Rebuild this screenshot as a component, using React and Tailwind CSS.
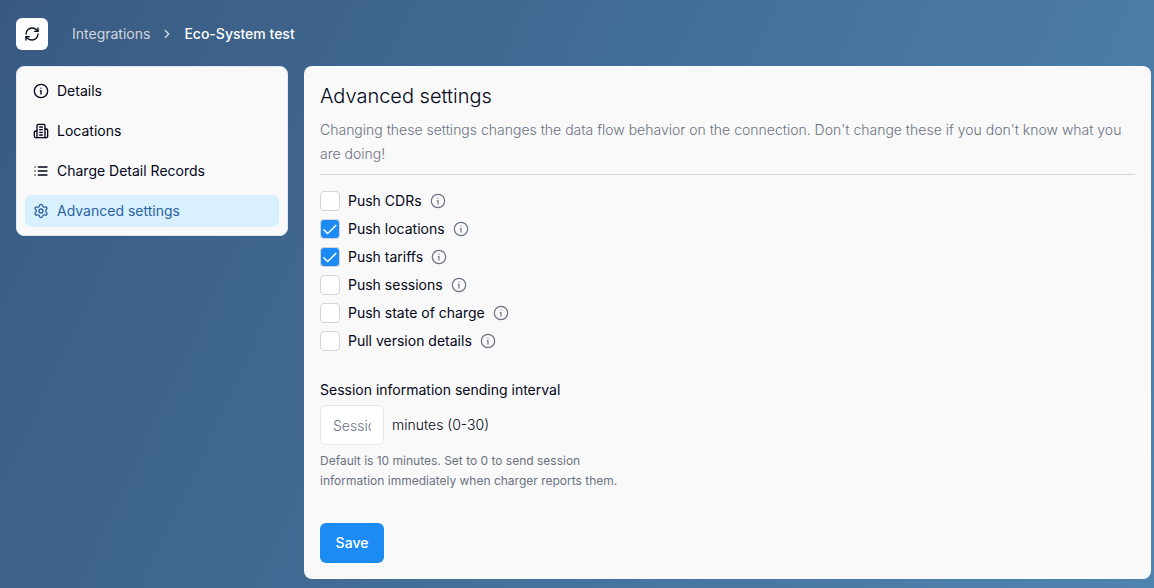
import { ChevronRight, RefreshCw, Settings } from 'lucide-react'

function Icon({ children, strokeWidth = 2, className }) {
  return (
    <svg
      viewBox="0 0 24 24"
      width="16"
      height="16"
      fill="none"
      stroke="currentColor"
      strokeWidth={strokeWidth}
      strokeLinecap="round"
      strokeLinejoin="round"
      className={className}
      aria-hidden="true"
    >
      {children}
    </svg>
  )
}

function InfoIcon(props) {
  return (
    <Icon {...props}>
      <circle cx="12" cy="12" r="10" />
      <path d="M11 11.5h1V16.5M12 7.8h.01" />
    </Icon>
  )
}

function BuildingIcon() {
  return (
    <Icon>
      <path d="M6 22V4a2 2 0 0 1 2-2h8a2 2 0 0 1 2 2v18Z" />
      <path d="M6 12H4a2 2 0 0 0-2 2v6a2 2 0 0 0 2 2h2" />
      <path d="M18 9h2a2 2 0 0 1 2 2v9a2 2 0 0 1-2 2h-2" />
      <path d="M10 6h4M10 10h4M10 14h4M10 18h4" />
    </Icon>
  )
}

function ListIcon() {
  return (
    <Icon>
      <path d="M8 6h13M8 12h13M8 18h13M3 6h.01M3 12h.01M3 18h.01" />
    </Icon>
  )
}

function SettingsIcon() {
  return <Settings size={16} />
}

const NAV_ITEMS = [
  { label: 'Details', NavIcon: InfoIcon },
  { label: 'Locations', NavIcon: BuildingIcon },
  { label: 'Charge Detail Records', NavIcon: ListIcon },
  { label: 'Advanced settings', NavIcon: SettingsIcon, active: true },
]

const OPTIONS = [
  { id: 'push-cdrs', label: 'Push CDRs' },
  { id: 'push-locations', label: 'Push locations', checked: true },
  { id: 'push-tariffs', label: 'Push tariffs', checked: true },
  { id: 'push-sessions', label: 'Push sessions' },
  { id: 'push-soc', label: 'Push state of charge' },
  { id: 'pull-version', label: 'Pull version details' },
]

function Option({ id, label, checked }) {
  return (
    <div className="flex items-center gap-2">
      <span className="relative flex">
        <input
          id={id}
          type="checkbox"
          defaultChecked={checked}
          className="peer size-5 appearance-none rounded border border-gray-300 bg-white checked:bg-[#1c8bf4]"
        />
        <svg
          viewBox="0 0 20 20"
          className="pointer-events-none absolute inset-0 hidden size-5 peer-checked:block"
          fill="none"
          stroke="white"
          strokeWidth="1.5"
        >
          <path d="M3.5 10.5 7.7 14.5 16.3 6" />
        </svg>
      </span>
      <label htmlFor={id}>{label}</label>
      <InfoIcon strokeWidth={1.75} className="text-gray-500" />
    </div>
  )
}

export default function App() {
  return (
    <div className="min-h-screen bg-[linear-gradient(115deg,#385a82,#4f84af)] pt-[18px] pr-[3px] pb-2 pl-4 font-['Inter',sans-serif] text-[14px] leading-5 text-slate-950">
      {/* Top bar */}
      <header className="mb-4 flex items-center gap-6">
        <button type="button" aria-label="Refresh" className="flex size-8 items-center justify-center rounded-md bg-white">
          <RefreshCw size={16} />
        </button>
        <nav className="flex items-center gap-2.5 text-white">
          <a href="#" className="text-gray-300">Integrations</a>
          <ChevronRight size={14} className="text-gray-200" />
          <span className="font-medium">Eco-System test</span>
        </nav>
      </header>

      <div className="flex items-start gap-4">
        {/* Sidebar */}
        <aside className="w-[272px] shrink-0 rounded-lg border border-slate-200 bg-[#f9f9f9] p-2">
          <nav className="flex flex-col gap-2">
            {NAV_ITEMS.map(({ label, NavIcon, active }) => (
              <a
                key={label}
                href="#"
                className={active
                  ? 'flex h-8 items-center gap-2 rounded-md bg-[#d9f0fe] px-2 text-[#2c62a3]'
                  : 'flex h-8 items-center gap-2 rounded-md px-2'}
              >
                <NavIcon />
                {label}
              </a>
            ))}
          </nav>
        </aside>

        {/* Settings form */}
        <main className="min-w-0 flex-1 rounded-lg bg-[#f9f9f9] p-4">
          <div className="border-b border-gray-300 pb-2">
            <h1 className="mb-2 text-xl leading-7 font-light">Advanced settings</h1>
            <p className="leading-6 font-light text-gray-500">
              Changing these settings changes the data flow behavior on the connection. Don't change these if you don't know what you are doing!
            </p>
          </div>

          <form className="mt-4">
            <div className="flex flex-col gap-2">
              {OPTIONS.map(option => <Option key={option.id} {...option} />)}
            </div>

            <label htmlFor="interval" className="mt-6 block py-[5px]">
              Session information sending interval
            </label>
            <div className="flex items-center gap-2">
              <input
                id="interval"
                type="text"
                placeholder="Session interval"
                className="h-10 w-16 rounded-md border border-slate-200 bg-white px-3 font-light placeholder:text-gray-500"
              />
              <span className="font-light">minutes (0-30)</span>
            </div>
            <p className="mt-1.5 max-w-[304px] text-[12px] leading-5 text-gray-500">
              Default is 10 minutes. Set to 0 to send session information immediately when charger reports them.
            </p>

            <button type="submit" className="mt-8 h-10 min-w-16 rounded-md bg-[#1c8bf4] px-[15px] font-medium text-white">
              Save
            </button>
          </form>
        </main>
      </div>
    </div>
  )
}
